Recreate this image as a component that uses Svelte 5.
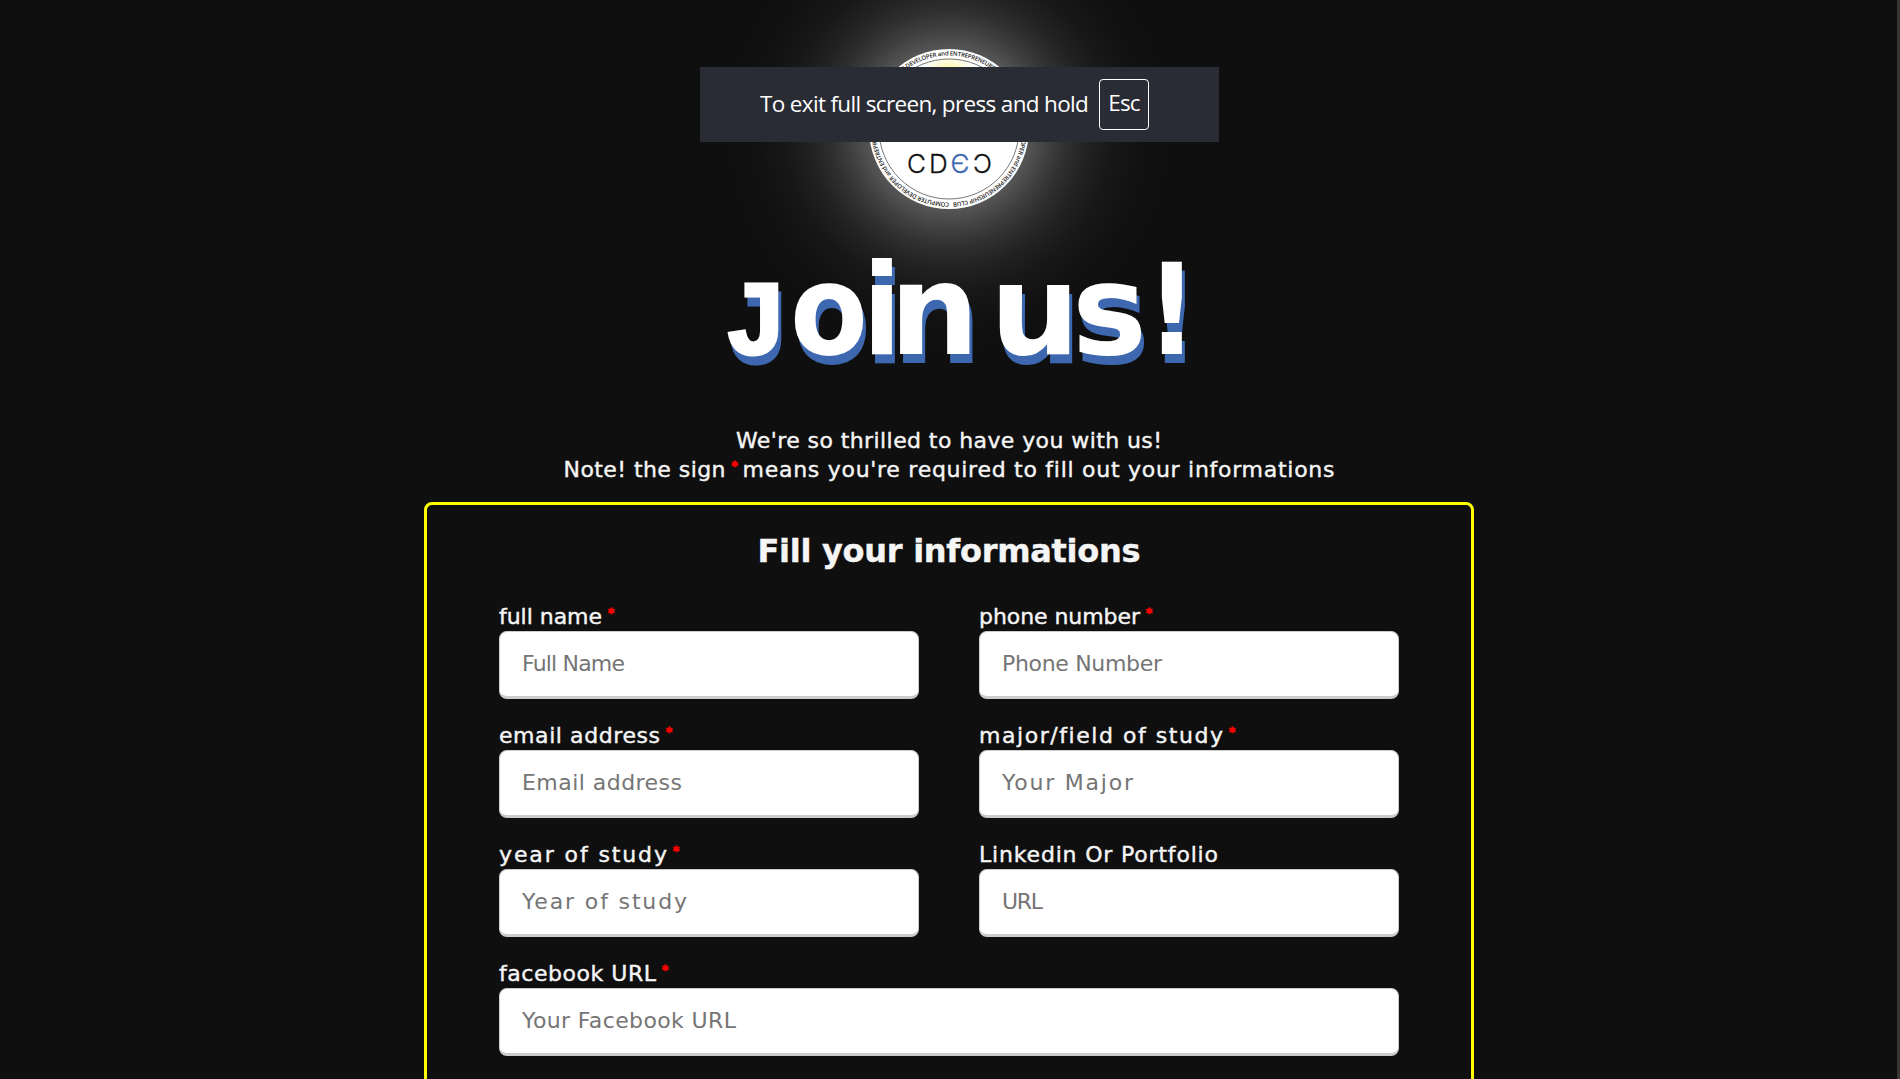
<script>
  const pixel = '"DejaVu Sans", Verdana, sans-serif';

  const fields = [
    { id: 'name', label: 'full name', w: 103, hint: 'Full Name', hw: 103, required: true },
    { id: 'phone', label: 'phone number', w: 161, hint: 'Phone Number', hw: 160, required: true },
    { id: 'email', label: 'email address', w: 161, hint: 'Email address', hw: 160, required: true },
    { id: 'major', label: 'major/field of study', w: 244, hint: 'Your Major', hw: 131, required: true },
    { id: 'year', label: 'year of study', w: 168, hint: 'Year of study', hw: 165, required: true },
    { id: 'link', label: 'Linkedin Or Portfolio', w: 239, hint: 'URL', hw: 41, required: false },
    { id: 'facebook', label: 'facebook URL', w: 157, hint: 'Your Facebook URL', hw: 214, required: true, wide: true }
  ];

  const club = 'COMPUTER DEVELOPER and ENTREPRENEURSHIP CLUB \u00a0';
  const ctx = document.createElement('canvas').getContext('2d');

  // Letter spacing that makes a string span the given width
  function tracking(text, width, size = 22, weight = 400) {
    ctx.font = `${weight} ${size}px ${pixel}`;
    return (width - ctx.measureText(text).width) / (text.length - 1);
  }
</script>

{#snippet fitted(text, width, size = 22, weight = 400)}
  <span class="fit" style="width: {width}px; letter-spacing: {tracking(text, width, size, weight)}px">{text}</span>
{/snippet}

<div class="screen">
  <main>
    <div class="logo">
      <svg viewBox="0 0 160 160" width="160" height="160">
        <defs>
          <radialGradient id="sun">
            <stop offset="0" stop-color="#fff59a" />
            <stop offset="1" stop-color="#fff" />
          </radialGradient>
          <path id="ring" d="M80 153.5 A73.5 73.5 0 0 1 80 6.500 A73.5 73.5 0 0 1 80 153.5" />
        </defs>
        <circle cx="80" cy="80" r="80" fill="#fff" />
        <ellipse cx="80" cy="22" rx="26" ry="15" fill="url(#sun)" />
        <circle cx="80" cy="80" r="70" fill="none" stroke="#555" stroke-width=".8" />
        <text class="around"><textPath href="#ring" textLength="460">{club + club + club}</textPath></text>
        <text class="cdec" y="124" x="38 60 81.500 104">CD<tspan class="blue">Є</tspan>Ɔ</text>
      </svg>
    </div>

    <h1>
      <svg viewBox="0 0 480 217" width="480" height="217">
        <text class="join" y="144.500" x="15 81 153.500 180.500 250 281 363 437"><tspan class="cap">J</tspan><tspan class="narrow">oi</tspan>n us<tspan class="narrow">!</tspan></text>
      </svg>
    </h1>

    <p>{@render fitted("We're so thrilled to have you with us!", 426)}</p>
    <p>
      {@render fitted('Note! the sign', 162)}<b class="star">*</b>{@render fitted("means you're required to fill out your informations", 592)}
    </p>

    <form>
      <h2>{@render fitted('Fill your informations', 383, 32, 700)}</h2>
      <div class="grid">
        {#each fields as f}
          <div class="field" class:wide={f.wide}>
            <label for={f.id}>{@render fitted(f.label, f.w)}{#if f.required}<b class="star">*</b>{/if}</label>
            <input id={f.id} placeholder={f.hint} style="letter-spacing: {tracking(f.hint, f.hw)}px" />
          </div>
        {/each}
      </div>
    </form>
  </main>
  <div class="scroll"></div>

  <div class="toast">
    <span class="message">To exit full screen, press and hold</span>
    <kbd>Esc</kbd>
  </div>
</div>

<style>
  :global(body) {
    background: #0f0f0f;
    overflow: hidden;
  }
  .screen {
    position: relative;
    display: flex;
    height: 1079px;
    overflow: hidden;
    background: #0f0f0f;
    color: #f5f5f5;
    font: 22px/29px 'DejaVu Sans', Verdana, sans-serif;
  }
  main {
    flex: 1;
    display: flex;
    flex-direction: column;
    align-items: center;
    padding: 49px 0 0 1px;
  }
  .scroll {
    width: 3px;
    background: #373633;
  }
  .logo {
    position: relative;
    flex: none;
    width: 160px;
    height: 160px;
  }
  /* Soft halo behind the badge */
  .logo::before {
    content: '';
    position: absolute;
    inset: -140px;
    background: radial-gradient(
      circle closest-side,
      #5a5a5a 0 34%,
      #525252 38%,
      #3f3f3f 46%,
      #2f2f2f 54%,
      #222 63%,
      #181818 74%,
      #111 88%,
      #0f0f0f 100%
    );
  }
  .logo svg,
  h1 {
    position: relative;
  }
  svg {
    display: block;
    overflow: visible;
  }
  .around {
    font: 600 6px 'Open Sans', sans-serif;
    fill: #222;
  }
  .cdec {
    font: 300 26px Inter, sans-serif;
    fill: #111;
    stroke: #111;
    stroke-width: 0.3px;
  }
  .blue {
    fill: #3d68b0;
    stroke: #3d68b0;
  }
  h1,
  h2,
  p {
    margin: 0;
    font-weight: 400;
  }
  .join {
    font: 700 126px 'DejaVu Sans', Verdana, sans-serif;
    fill: #fff;
    filter: drop-shadow(3px 9px 0 #3d68b0);
  }
  .narrow {
    font-family: 'DejaVu Sans Condensed', 'DejaVu Sans', sans-serif;
    font-stretch: condensed;
  }
  .cap {
    font: 700 106px 'Liberation Mono', monospace;
    stroke: #fff;
    stroke-width: 3px;
  }
  p,
  label {
    display: flex;
    height: 29px;
  }
  .fit {
    display: inline-block;
    white-space: nowrap;
    -webkit-text-stroke: 0.4px currentColor;
  }
  .star {
    width: 5px;
    margin: 0 6px;
    color: #f00;
    font-size: 12px;
    line-height: 22px;
    -webkit-text-stroke: 0.8px #f00;
  }
  form {
    flex: none;
    box-sizing: border-box;
    width: 1050px;
    height: 900px;
    margin-top: 18px;
    padding: 26px 72px 0;
    border: 3px solid #ff0;
    border-radius: 8px;
  }
  h2 {
    display: flex;
    justify-content: center;
    margin-bottom: 31px;
    font-size: 32px;
    line-height: 40px;
  }
  h2 .fit,
  h2 {
    font-weight: 700;
  }
  .grid {
    display: grid;
    grid-template-columns: 420px 420px;
    gap: 22px 60px;
  }
  .wide {
    grid-column: span 2;
  }
  input {
    display: block;
    box-sizing: border-box;
    width: 100%;
    height: 68px;
    margin: 0;
    padding: 0 22px 2px;
    border: 1px solid #ccc;
    border-bottom-width: 3px;
    border-radius: 8px;
    background: #fff;
    font: inherit;
  }
  input::placeholder {
    color: #757575;
    opacity: 1;
  }
  .toast {
    position: absolute;
    top: 67px;
    left: 700px;
    box-sizing: border-box;
    width: 519px;
    height: 75px;
    display: flex;
    align-items: center;
    padding-left: 60px;
    background: #292c34;
    color: #fff;
    font: 22.5px 'Open Sans', 'Noto Sans', sans-serif;
  }
  .message {
    width: 339px;
    padding-bottom: 2px;
    white-space: nowrap;
    letter-spacing: -0.66px;
  }
  kbd {
    box-sizing: border-box;
    width: 50px;
    height: 51px;
    border: 1.5px solid #fff;
    border-radius: 4px;
    font: inherit;
    line-height: 46px;
    text-align: center;
    letter-spacing: -0.85px;
  }
</style>
